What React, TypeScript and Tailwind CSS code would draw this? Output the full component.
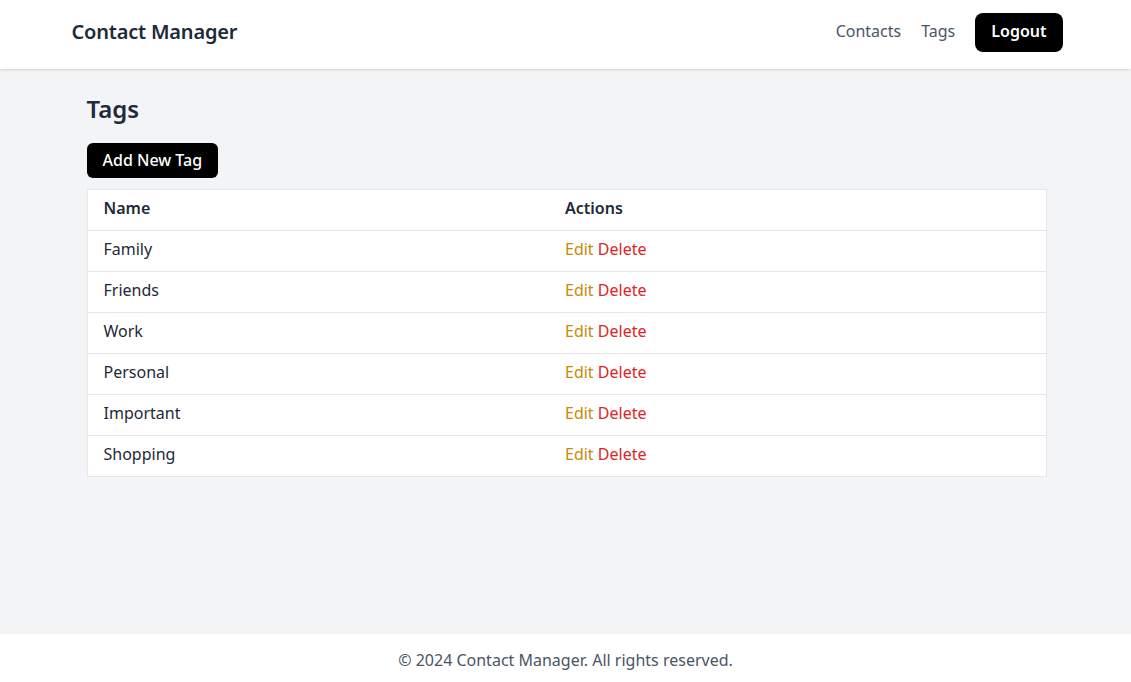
const tags = ['Family', 'Friends', 'Work', 'Personal', 'Important', 'Shopping'];

export default function App() {
  return (
    <div className="flex min-h-screen flex-col bg-gray-100 text-gray-800" style={{ fontFamily: '"Noto Sans", sans-serif' }}>
      <header className="bg-white pt-[13px] pb-[17px] shadow">
        <div className="mx-auto flex h-[39px] max-w-[1024px] items-center justify-between pr-[15px] pl-[18px]">
          <h1 className="-mt-0.5 text-xl leading-none font-semibold tracking-[-0.2px] text-gray-800">Contact Manager</h1>
          <nav className="flex items-center gap-5">
            <a className="-mt-1 text-base text-gray-600">Contacts</a>
            <a className="-mt-1 text-base text-gray-600">Tags</a>
            <button className="h-[39px] rounded-lg bg-black px-4 pb-1 text-base font-semibold text-white">Logout</button>
          </nav>
        </div>
      </header>

      <main className="mx-auto w-full max-w-[1024px] flex-1 pt-6 pr-[31px] pl-[33px]">
        <h2 className="text-2xl font-semibold text-gray-800">Tags</h2>
        <button className="mt-[18px] h-[35px] rounded-md bg-black px-4 pb-0.5 text-base font-medium text-white">Add New Tag</button>
        <table className="mt-[11px] w-full table-fixed border border-gray-200 bg-white text-left">
          <thead>
            <tr className="h-[41px]">
              <th className="w-[462px] px-4 pb-1 font-semibold">Name</th>
              <th className="px-4 pb-1 font-semibold">Actions</th>
            </tr>
          </thead>
          <tbody>
            {tags.map((tag) => (
              <tr key={tag} className="h-[41px] border-t border-gray-200">
                <td className="px-4 pb-1 text-gray-800">{tag}</td>
                <td className="px-4 pb-1">
                  <a className="text-[#ca8a04]">Edit</a> <a className="text-[#dc2626]">Delete</a>
                </td>
              </tr>
            ))}
          </tbody>
        </table>
      </main>

      <footer className="flex h-12 items-center justify-center bg-white pt-1 text-gray-600">
        © 2024 Contact Manager. All rights reserved.
      </footer>
    </div>
  );
}
